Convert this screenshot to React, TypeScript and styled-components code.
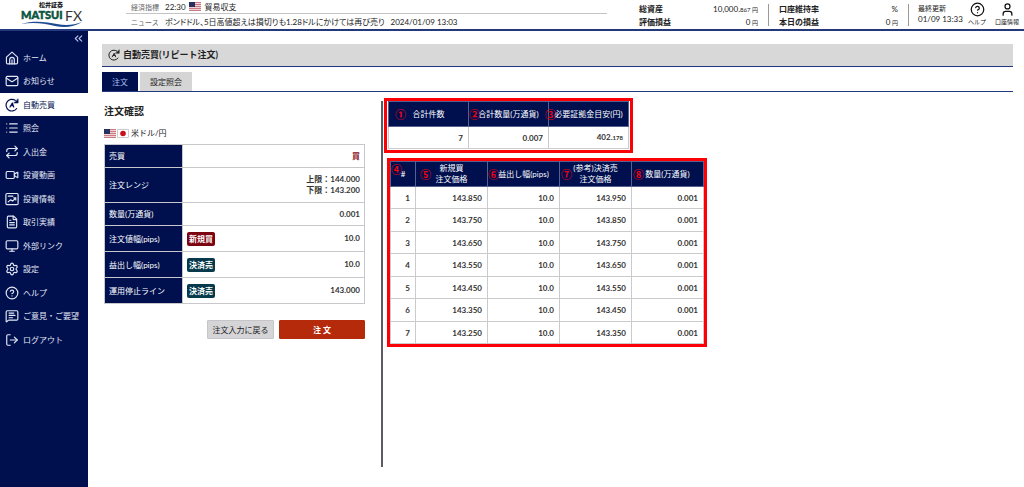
import React from "react";
import styled, { createGlobalStyle } from "styled-components";
import {
  ChevronsLeft,
  CircleHelp,
  FileText,
  List,
  LogOut,
  Mail,
  MessageSquareText,
  Monitor,
  Repeat,
  Settings,
  User,
  Video,
} from "lucide-react";

const navy = "#00104f";
const line = "#24397d";

const GlobalStyle = createGlobalStyle`
  *, *::before, *::after { box-sizing: border-box; }
  body {
    margin: 0;
    background: #fff;
    color: #222;
    font-family: Lato, "Noto Sans CJK JP", sans-serif;
    font-size: 8px;
    line-height: 12px;
  }
  button { font-family: inherit; }
`;

const Page = styled.div`
  display: flex;
  flex-direction: column;
  min-height: 100vh;
`;

const Header = styled.header`
  display: flex;
  height: 31px;
  border-bottom: 2px solid ${line};
`;

const LogoLink = styled.a`
  width: 126px;
  flex: none;
  svg { display: block; }
`;

const News = styled.dl`
  flex: 1;
  max-width: 481px;
  margin: 0;
`;

const NewsRow = styled.div`
  display: flex;
  align-items: center;
  height: 13px;
  padding-left: 5px;
  & + & {
    height: 17px;
    border-top: 1px solid #c4c4c4;
  }
  dt {
    width: 34px;
    flex: none;
    color: #666;
    font-size: 7px;
  }
  dd {
    display: flex;
    align-items: center;
    margin: 0;
    white-space: nowrap;
    font-feature-settings: "palt";
  }
  dd svg { margin: 0 4px 0 3px; }
  time { margin-left: 6px; }
`;

const Summary = styled.div`
  display: flex;
  margin-left: auto;
  padding: 4px 2px 0 0;
`;

const Stats = styled.dl`
  width: 140px;
  height: 22px;
  margin: 0;
  padding: 0 10px;
  border-right: 1px solid #999;
  div {
    display: flex;
    justify-content: space-between;
    height: 13px;
    line-height: 10px;
  }
  dt { font-weight: 700; }
  dd { margin: 0; }
  small { font-size: 6px; }
`;

const Updated = styled.div`
  width: 53px;
  padding-left: 9px;
  line-height: 10px;
  white-space: nowrap;
  span { display: block; font-size: 7px; line-height: 8px; margin-bottom: 2px; }
`;

const HeaderButton = styled.button`
  display: flex;
  flex-direction: column;
  align-items: center;
  width: 30px;
  height: 26px;
  margin-top: -2px;
  padding: 0;
  border: 0;
  background: none;
  color: #111;
  font-size: 6px;
  line-height: 10px;
  white-space: nowrap;
`;

const Body = styled.div`
  display: flex;
  flex: 1;
`;

const Sidebar = styled.nav`
  width: 88px;
  flex: none;
  background: ${navy};
  color: #fff;
  ul { margin: 0; padding: 0; list-style: none; }
  li { height: 23px; }
  li:nth-child(even) { height: 24px; }
`;

const Collapse = styled.button`
  display: block;
  margin-left: auto;
  padding: 1px 3px 0 0;
  height: 15px;
  border: 0;
  background: none;
  color: #b9c3e6;
`;

const NavLink = styled.a<{ $active?: boolean }>`
  display: flex;
  align-items: center;
  gap: 4px;
  height: 100%;
  padding-left: 5px;
  text-decoration: none;
  background: ${(p) => (p.$active ? "#fff" : "transparent")};
  color: ${(p) => (p.$active ? navy : "#e4e8f5")};
  svg { flex: none; }
`;

const Main = styled.main`
  flex: 1;
  min-width: 0;
  padding: 13px 11px 21px 14px;
`;

const Title = styled.h1`
  display: flex;
  align-items: center;
  gap: 3px;
  height: 23px;
  margin: 0;
  padding-left: 6px;
  background: #d8d8d8;
  border-bottom: 1px solid ${line};
  font-size: 9px;
`;

const Tabs = styled.div`
  display: flex;
  gap: 2px;
  margin-top: 5px;
  border-bottom: 1px solid ${line};
`;

const Tab = styled.button<{ $active?: boolean }>`
  height: 19px;
  padding: 0 10px;
  border: 0;
  font-size: 8px;
  background: ${(p) => (p.$active ? navy : "#d5d5d6")};
  color: ${(p) => (p.$active ? "#a9c0ee" : "#222")};
`;

const Columns = styled.div`
  display: flex;
  margin-top: 7px;
`;

const Confirm = styled.section`
  width: 279px;
  flex: none;
  padding: 6px 16px 0 2px;
`;

const SubTitle = styled.h2`
  margin: 0 0 10px;
  font-size: 10px;
  line-height: 12px;
`;

const Pair = styled.div`
  display: flex;
  align-items: center;
  gap: 1px;
  height: 12px;
  margin-bottom: 5px;
  span { margin-left: 1px; }
`;

const Details = styled.table`
  width: 100%;
  border-collapse: collapse;
  th, td { padding: 0 4px; border: 1px solid #c8c8cc; }
  th {
    width: 78px;
    background: ${navy};
    color: #fff;
    text-align: left;
    font-weight: 400;
    white-space: nowrap;
  }
  td { font-weight: 700; text-align: right; color: #333; line-height: 11px; }
`;

const DetailRow = styled.tr<{ $size?: "small" | "tall" }>`
  height: ${(p) => (p.$size === "small" ? 23 : p.$size === "tall" ? 35 : 26)}px;
`;

const Split = styled.div`
  display: flex;
  align-items: center;
  justify-content: space-between;
`;

const Side = styled.span<{ $kind: "buy" | "sell" }>`
  padding: 0 2px;
  border-radius: 2px;
  background: ${(p) => (p.$kind === "buy" ? "#7c0410" : "#06394c")};
  color: #fff;
  line-height: 14px;
`;

const Buy = styled.span`
  color: #850a14;
`;

const Actions = styled.div`
  display: flex;
  justify-content: flex-end;
  gap: 5px;
  margin-top: 16px;
`;

const Action = styled.button<{ $primary?: boolean }>`
  width: ${(p) => (p.$primary ? 86 : 67)}px;
  height: 19px;
  padding: 0;
  border: 1px solid ${(p) => (p.$primary ? "#b52a0a" : "#c6c6c8")};
  border-radius: 1px;
  background: ${(p) => (p.$primary ? "#b52a0a" : "#d5d5d7")};
  color: ${(p) => (p.$primary ? "#fff" : "#222")};
  font-size: 8px;
  font-weight: ${(p) => (p.$primary ? 700 : 400)};
`;

const Results = styled.section`
  flex: 1;
  min-height: 366px;
  margin-top: 2px;
  padding-left: 1px;
  border-left: 2px solid #5a5d62;
`;

const Frame = styled.div<{ $wide?: boolean }>`
  width: ${(p) => (p.$wide ? 320 : 249)}px;
  margin: ${(p) => (p.$wide ? "5px 0 0 3px" : "-3px 0 0")};
  padding: ${(p) => (p.$wide ? "0" : "0 1px 1px")};
  border: 3px solid #fb0007;
`;

const Grid = styled.table`
  width: 100%;
  table-layout: fixed;
  border-collapse: collapse;
  th {
    position: relative;
    height: 25px;
    padding: 0;
    background: ${navy};
    border: 1px solid #56618f;
    color: #fff;
    font-weight: 400;
    line-height: 11px;
    white-space: nowrap;
  }
  td {
    height: 22px;
    padding: 0 5px 0 0;
    border: 1px solid #cbcbce;
    color: #333;
    font-weight: 700;
    text-align: right;
  }
  tr:nth-child(even) td { height: 23px; }
  small { font-size: 6px; }
`;

const Mark = styled.span<{ $left: number; $top?: number }>`
  position: absolute;
  left: ${(p) => p.$left}px;
  top: ${(p) => p.$top ?? 6}px;
  color: #f0000c;
  font-family: "Noto Sans CJK JP", sans-serif;
  font-size: 11px;
  font-weight: 700;
  line-height: 12px;
`;

const Logo = () => (
  <svg width="88" height="29" viewBox="0 0 88 29" role="img" aria-label="松井証券 MATSUI FX">
    <text x="39" y="7" fontSize="6" fontWeight="900" fill="#222">松井証券</text>
    <text x="21" y="19" fontSize="11" fontWeight="900" fill="#0a5540" stroke="#0a5540" strokeWidth=".5">MATSUI</text>
    <text x="65" y="21" fontSize="14" fill="#333">FX</text>
    <path d="M21 24C34 20 47 22 57 24C66 26 74 25 82 22C74 27 65 28 55 26C43 23 33 22 21 24Z" fill="#1d4b92" />
  </svg>
);

const UsFlag = () => (
  <svg width="12" height="9" viewBox="0 0 12 9" aria-hidden="true">
    <path fill="#f0d3d6" d="M0 0h12v9H0z" />
    <path fill="#c97a82" d="M0 0h12v1H0zM0 2h12v1H0zM0 4h12v1H0zM0 6h12v1H0zM0 8h12v1H0z" />
    <path fill="#27305f" d="M0 0h6v5H0z" />
  </svg>
);

const JpFlag = () => (
  <svg width="12" height="9" viewBox="0 0 12 9" aria-hidden="true">
    <path fill="#fff" stroke="#ccc" strokeWidth="1" d="M.5.5h11v8H.5z" />
    <circle cx="6" cy="4.500" r="2.800" fill="#c8101c" />
  </svg>
);

type IconProps = { size?: number };

const Svg = ({ size = 12, children }: IconProps & { children: React.ReactNode }) => (
  <svg
    width={size}
    height={size}
    viewBox="0 0 24 24"
    fill="none"
    stroke="currentColor"
    strokeWidth="2"
    strokeLinecap="round"
    strokeLinejoin="round"
    aria-hidden="true"
  >
    {children}
  </svg>
);

const HomeIcon = ({ size }: IconProps) => (
  <Svg size={size}>
    <path d="M2.500 10.500 12 2l9.500 8.500V20a2 2 0 0 1-2 2h-15a2 2 0 0 1-2-2Z" />
    <path d="M8 22v-7a4 4 0 0 1 8 0v7M12 15v7" />
  </Svg>
);

const AutoIcon = ({ size }: IconProps) => (
  <Svg size={size}>
    <path d="M17.500 4A10 10 0 1 0 20 18" />
    <path d="M15.500 8.500h7V2Z" fill="currentColor" strokeWidth="1" />
    <path d="M8.500 15.500 12.500 8.500l2.500 7M10.500 13h3.500" />
  </Svg>
);

const ChartIcon = ({ size }: IconProps) => (
  <Svg size={size}>
    <rect x="1.500" y="2.500" width="21" height="19" rx="2" />
    <path d="M5.500 7h8M5.500 17l4-3.500 3.500 2 5.500-5M15 10h3.500v3.500" />
  </Svg>
);

const navItems = [
  { label: "ホーム", Icon: HomeIcon },
  { label: "お知らせ", Icon: Mail },
  { label: "自動売買", Icon: AutoIcon, active: true },
  { label: "照会", Icon: List },
  { label: "入出金", Icon: Repeat },
  { label: "投資動画", Icon: Video },
  { label: "投資情報", Icon: ChartIcon },
  { label: "取引実績", Icon: FileText },
  { label: "外部リンク", Icon: Monitor },
  { label: "設定", Icon: Settings },
  { label: "ヘルプ", Icon: CircleHelp },
  { label: "ご意見・ご要望", Icon: MessageSquareText },
  { label: "ログアウト", Icon: LogOut },
];

const orders = [
  ["1", "143.850", "10.0", "143.950", "0.001"],
  ["2", "143.750", "10.0", "143.850", "0.001"],
  ["3", "143.650", "10.0", "143.750", "0.001"],
  ["4", "143.550", "10.0", "143.650", "0.001"],
  ["5", "143.450", "10.0", "143.550", "0.001"],
  ["6", "143.350", "10.0", "143.450", "0.001"],
  ["7", "143.250", "10.0", "143.350", "0.001"],
];

export default function App() {
  return (
    <Page>
      <GlobalStyle />
      <Header>
        <LogoLink href="#"><Logo /></LogoLink>
        <News>
          <NewsRow>
            <dt>経済指標</dt>
            <dd>22:30 <UsFlag /> 貿易収支</dd>
          </NewsRow>
          <NewsRow>
            <dt>ニュース</dt>
            <dd>
              <span>ポンドドル、5日高値超えは損切りも1.28ドルにかけては再び売り</span>
              <time>2024/01/09 13:03</time>
            </dd>
          </NewsRow>
        </News>
        <Summary>
          <Stats>
            <div><dt>総資産</dt><dd>10,000.<small>867 円</small></dd></div>
            <div><dt>評価損益</dt><dd>0<small> 円</small></dd></div>
          </Stats>
          <Stats>
            <div><dt>口座維持率</dt><dd>%</dd></div>
            <div><dt>本日の損益</dt><dd>0<small> 円</small></dd></div>
          </Stats>
          <Updated><span>最終更新</span>01/09 13:33</Updated>
          <HeaderButton><CircleHelp size={15} />ヘルプ</HeaderButton>
          <HeaderButton><User size={15} />口座情報</HeaderButton>
        </Summary>
      </Header>
      <Body>
        <Sidebar>
          <Collapse aria-label="メニューを閉じる"><ChevronsLeft size={13} /></Collapse>
          <ul>
            {navItems.map(({ label, Icon, active }) => (
              <li key={label}>
                <NavLink href="#" $active={active}><Icon size={14} />{label}</NavLink>
              </li>
            ))}
          </ul>
        </Sidebar>
        <Main>
          <Title><AutoIcon size={12} />自動売買(リピート注文)</Title>
          <Tabs>
            <Tab $active>注文</Tab>
            <Tab>設定照会</Tab>
          </Tabs>
          <Columns>
            <Confirm>
              <SubTitle>注文確認</SubTitle>
              <Pair><UsFlag /><JpFlag /><span>米ドル/円</span></Pair>
              <Details>
                <tbody>
                  <DetailRow $size="small"><th scope="row">売買</th><td><Buy>買</Buy></td></DetailRow>
                  <DetailRow $size="tall"><th scope="row">注文レンジ</th><td>上限：144.000<br />下限：143.200</td></DetailRow>
                  <DetailRow $size="small"><th scope="row">数量(万通貨)</th><td>0.001</td></DetailRow>
                  <DetailRow><th scope="row">注文値幅(pips)</th><td><Split><Side $kind="buy">新規買</Side>10.0</Split></td></DetailRow>
                  <DetailRow><th scope="row">益出し幅(pips)</th><td><Split><Side $kind="sell">決済売</Side>10.0</Split></td></DetailRow>
                  <DetailRow><th scope="row">運用停止ライン</th><td><Split><Side $kind="sell">決済売</Side>143.000</Split></td></DetailRow>
                </tbody>
              </Details>
              <Actions>
                <Action>注文入力に戻る</Action>
                <Action $primary>注 文</Action>
              </Actions>
            </Confirm>
            <Results>
              <Frame>
                <Grid>
                  <thead>
                    <tr>
                      <th scope="col"><Mark $left={6}>①</Mark>合計件数</th>
                      <th scope="col"><Mark $left={0}>②</Mark>合計数量(万通貨)</th>
                      <th scope="col"><Mark $left={-4}>③</Mark>必要証拠金目安(円)</th>
                    </tr>
                  </thead>
                  <tbody>
                    <tr><td>7</td><td>0.007</td><td>402.<small>178</small></td></tr>
                  </tbody>
                </Grid>
              </Frame>
              <Frame $wide>
                <Grid>
                  <colgroup><col width="25" /><col /><col /><col /><col /></colgroup>
                  <thead>
                    <tr>
                      <th scope="col"><Mark $left={0} $top={1}>④</Mark>#</th>
                      <th scope="col"><Mark $left={4}>⑤</Mark>新規買<br />注文価格</th>
                      <th scope="col"><Mark $left={0}>⑥</Mark>益出し幅(pips)</th>
                      <th scope="col"><Mark $left={1}>⑦</Mark>(参考)決済売<br />注文価格</th>
                      <th scope="col"><Mark $left={1}>⑧</Mark>数量(万通貨)</th>
                    </tr>
                  </thead>
                  <tbody>
                    {orders.map((row) => (
                      <tr key={row[0]}>{row.map((cell, i) => <td key={i}>{cell}</td>)}</tr>
                    ))}
                  </tbody>
                </Grid>
              </Frame>
            </Results>
          </Columns>
        </Main>
      </Body>
    </Page>
  );
}
